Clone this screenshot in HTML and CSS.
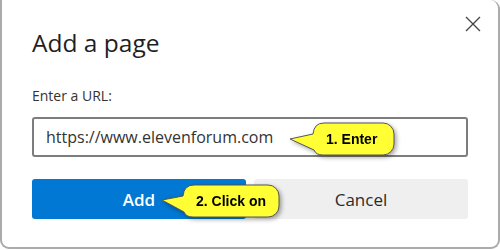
FILE: index.html
```html
<!DOCTYPE html>
<html lang="en">
<head>
    <meta charset="UTF-8">
    <title>Add a page</title>
    <link rel="stylesheet" href="styles.css">
</head>
<body>
<div id="dialog">
    <div class="dialog-head">
        <h1 class="dialog-title">Add a page</h1>
        <button class="close-btn" aria-label="Close">
            <svg width="16" height="16" viewBox="0 0 16 16">
                <path d="M1 1 L15 15 M15 1 L1 15" stroke="#444" stroke-width="1.3" fill="none"/>
            </svg>
        </button>
    </div>
    <label class="url-label" for="url">Enter a URL:</label>
    <div class="url-box" id="url">https://www.elevenforum.com</div>
    <div class="btn-row">
        <button class="btn btn-add">Add</button>
        <button class="btn btn-cancel">Cancel</button>
    </div>

    <!-- callouts -->
    <div class="callout callout-1">
        <svg width="112" height="42" viewBox="0 0 112 42">
            <path d="M38 4 H97 A11 11 0 0 1 108 15 V25 A11 11 0 0 1 97 36 H37 Q30 36 28 31 L4 20 L27 15 Q28 4 38 4 Z" fill="#ffff33" stroke="#555" stroke-width="1"/>
        </svg>
        <span class="callout-text">1. Enter</span>
    </div>
    <div class="callout callout-2">
        <svg width="126" height="42" viewBox="0 0 126 42">
            <path d="M36 4 H110 A11 11 0 0 1 121 15 V25 A11 11 0 0 1 110 36 H35 Q28 36 26 31 L4 19 L25 15 Q26 4 36 4 Z" fill="#ffff33" stroke="#555" stroke-width="1"/>
        </svg>
        <span class="callout-text">2. Click on</span>
    </div>
</div>
</body>
</html>
```
FILE: styles.css
```css
*{
    margin: 0;
    padding: 0;
    box-sizing: border-box;
}
body{
    background-color: #fff;
    font-family: "Open Sans", "Noto Sans", sans-serif;
}
#dialog{
    position: relative;
    width: 500px;
    height: 249px;
    padding: 16px 30px 0 30px;
    background-color: #fff;
    border: 2px solid #ababab;
    border-top: none;
    border-radius: 0 9px 9px 9px;
}
.dialog-head{
    display: flex;
    justify-content: space-between;
    align-items: flex-start;
}
.dialog-title{
    margin-top: 11px;
    font-size: 24.5px;
    line-height: 32px;
    font-weight: 400;
    color: #1f1f1f;
}
.close-btn{
    width: 16px;
    height: 16px;
    margin-right: -13px;
    border: none;
    background: none;
}
.close-btn svg{
    display: block;
}
.url-label{
    display: block;
    margin-top: 27px;
    font-size: 14px;
    line-height: 20px;
    color: #333;
}
.url-box{
    margin-top: 11px;
    height: 40px;
    padding: 0 12px;
    border: 2px solid #7d7d7d;
    border-radius: 3px;
    font-size: 16px;
    line-height: 36px;
    color: #333;
}
.btn-row{
    display: grid;
    grid-template-columns: 1fr 1fr;
    gap: 8px;
    margin-top: 22px;
}
.btn{
    height: 40px;
    border: none;
    border-radius: 3px;
    font-family: "Open Sans", "Noto Sans", sans-serif;
    font-size: 17px;
}
.btn-add{
    background-color: #0078d4;
    color: #fff;
    font-weight: 600;
}
.btn-cancel{
    background-color: #efefef;
    color: #2b2b2b;
}
.callout{
    position: absolute;
    height: 42px;
    filter: drop-shadow(2px 2px 2px rgba(0,0,0,.35));
}
.callout svg{
    position: absolute;
    left: 0;
    top: 0;
}
.callout-text{
    position: absolute;
    top: 4px;
    height: 32px;
    line-height: 32px;
    font-family: "Liberation Sans", Arial, sans-serif;
    font-weight: 700;
    font-size: 14px;
    color: #000;
}
.callout-1{
    left: 284px;
    top: 119px;
    width: 112px;
}
.callout-1 .callout-text{
    left: 40px;
}
.callout-2{
    left: 156px;
    top: 181px;
    width: 126px;
}
.callout-2 .callout-text{
    left: 38px;
}
```
